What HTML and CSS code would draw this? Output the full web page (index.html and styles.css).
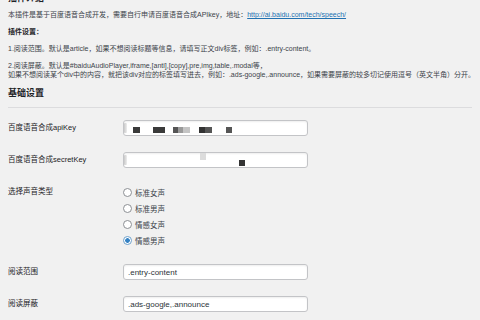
FILE: index.html
```html
<!DOCTYPE html>
<html lang="zh-CN">
<head>
<meta charset="utf-8">
<title>百度语音合成设置</title>
<link rel="stylesheet" href="styles.css">
</head>
<body>
<div class="wrap">
  <h3 class="intro-title">插件介绍</h3>
  <p class="desc">本插件是基于百度语音合成开发，需要自行申请百度语音合成APIkey，地址：<a href="#">http://ai.baidu.com/tech/speech/</a></p>
  <p class="desc strong">插件设置：</p>
  <p class="desc">1.阅读范围。默认是article，如果不想阅读标题等信息，请填写正文div标签，例如：.entry-content。</p>
  <p class="desc">2.阅读屏蔽。默认是#baiduAudioPlayer,iframe,[anti],[copy],pre,img,table,.modal等，<br>如果不想阅读某个div中的内容，就把该div对应的标签填写进去，例如：.ads-google,.announce，如果需要屏蔽的较多切记使用逗号（英文半角）分开。</p>
  <h2 class="section-title">基础设置</h2>
  <hr class="sep">
  <div class="form">
    <div class="label">百度语音合成apiKey</div>
    <div class="field">
      <div class="masked">
        <input class="text" type="text" value="">
        <span class="edge"></span>
        <span class="px p1"></span>
        <span class="px p2"></span>
        <span class="px p3"></span>
        <span class="px p4"></span>
        <span class="px p5"></span>
      </div>
    </div>

    <div class="label">百度语音合成secretKey</div>
    <div class="field">
      <div class="masked">
        <input class="text" type="text" value="">
        <span class="edge"></span>
        <span class="px s1"></span>
        <span class="px s2"></span>
      </div>
    </div>

    <div class="label">选择声音类型</div>
    <div class="field radios">
      <label class="radio"><input type="radio" name="voice">标准女声</label>
      <label class="radio"><input type="radio" name="voice">标准男声</label>
      <label class="radio"><input type="radio" name="voice">情感女声</label>
      <label class="radio"><input type="radio" name="voice" checked>情感男声</label>
    </div>

    <div class="label">阅读范围</div>
    <div class="field"><input class="text" type="text" value=".entry-content"></div>

    <div class="label">阅读屏蔽</div>
    <div class="field"><input class="text" type="text" value=".ads-google,.announce"></div>
  </div>
</div>
</body>
</html>
```
FILE: styles.css
```css
html, body {
  margin: 0;
  padding: 0;
  background: #f1f1f1;
  overflow: hidden;
}
body {
  padding: 0 8px;
  font-family: "Liberation Sans", "Noto Sans CJK SC", sans-serif;
  color: #3c434a;
}
.wrap {
  width: 464px;
}
.intro-title {
  margin: -8px 0 6px;
  font-size: 9px;
  line-height: 12px;
  font-weight: bold;
  color: #1d2327;
}
.desc {
  margin: 0 0 8px;
  font-size: 7px;
  line-height: 9px;
  white-space: nowrap;
  color: #3c434a;
}
.desc a {
  color: #2271b1;
  text-decoration: underline;
}
.strong {
  font-weight: bold;
  color: #1d2327;
}
.section-title {
  margin: 8px 0 0;
  font-size: 9px;
  line-height: 12px;
  font-weight: bold;
  color: #1d2327;
}
.sep {
  border: 0;
  border-top: 1px solid #dcdcde;
  margin: 8px 0 4px;
  height: 0;
}
.form {
  display: grid;
  grid-template-columns: 115px 185px;
}
.label, .field {
  padding: 8px 0;
}
.label {
  font-size: 7.5px;
  line-height: 16px;
  color: #1d2327;
}
.text {
  display: block;
  box-sizing: border-box;
  width: 185px;
  height: 16px;
  margin: 0;
  padding: 0 4px;
  border: 1px solid #c3c4c7;
  border-radius: 3px;
  background: #fff;
  box-shadow: inset 0 1px 2px rgba(0, 0, 0, 0.07);
  font-family: "Liberation Sans", "Noto Sans CJK SC", sans-serif;
  font-size: 8px;
  color: #2c3338;
  outline: none;
}
.masked {
  position: relative;
}
.edge {
  position: absolute;
  left: 1px;
  top: 3px;
  width: 3px;
  height: 10px;
  background: linear-gradient(90deg, #c8c8c8, #eeeeee);
  border-radius: 1px;
}
.px {
  position: absolute;
  height: 6px;
  top: 7px;
  background: #3a3a3a;
}
.p1 { left: 10px; width: 7px; }
.p2 { left: 30px; width: 12px; }
.p3 { left: 50px; width: 17px; background: linear-gradient(90deg, #555 0 5px, #999 5px 10px, #c4c4c4 10px); }
.p4 { left: 76px; width: 13px; background: linear-gradient(90deg, #333 0 6px, #555 6px); }
.p5 { left: 103px; width: 6px; background: #555; }
.s1 { left: 77px; top: 1px; width: 6px; height: 7px; background: #dcdcdc; }
.s2 { left: 116px; top: 8px; width: 6px; height: 6px; background: #333; }
.radios {
  display: flex;
  flex-direction: column;
}
.radio {
  display: flex;
  align-items: center;
  height: 16px;
  font-size: 7.5px;
  color: #3c434a;
}
.radio input {
  appearance: none;
  -webkit-appearance: none;
  box-sizing: border-box;
  width: 9px;
  height: 9px;
  margin: 0 3px 0 0;
  border: 1px solid #8c8f94;
  border-radius: 50%;
  background: #fff;
}
.radio input:checked {
  border-color: #6ea1cc;
  background: radial-gradient(circle, #3582c4 0 2px, #fff 2.6px);
}
```
